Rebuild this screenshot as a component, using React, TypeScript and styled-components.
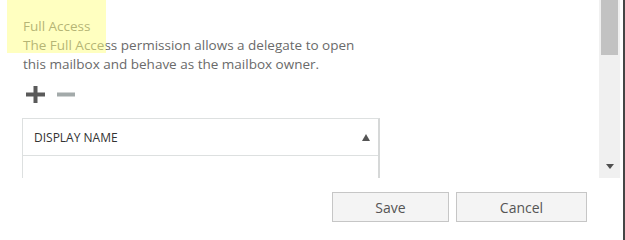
import React from 'react'
import styled, { createGlobalStyle } from 'styled-components'

const GlobalStyle = createGlobalStyle`
	body {
		margin: 0;
		background: #fff;
		font-family: "Open Sans", "Noto Sans", "Liberation Sans", sans-serif;
	}
`

const PlusIcon: React.FC = () => (
	<svg width="19" height="17" viewBox="0 0 19 17">
		<rect x="7.5" y="0" width="4" height="17" fill="#5a5a5a" />
		<rect x="0" y="6.5" width="19" height="4" fill="#5a5a5a" />
	</svg>
)

const MinusIcon: React.FC = () => (
	<svg width="18" height="17" viewBox="0 0 18 17">
		<rect x="0" y="6.5" width="18" height="4" fill="#a3aaaa" />
	</svg>
)

export default function App() {
	return (
		<>
			<GlobalStyle />
			<Frame>
				<Panel>
					<ScrollArea>
						<Content>
							<Highlight />
							<Title>Full Access</Title>
							<Description>
								The Full Access permission allows a delegate to open
								<br />
								this mailbox and behave as the mailbox owner.
							</Description>
							<Toolbar>
								<IconButton>
									<PlusIcon />
								</IconButton>
								<IconButton>
									<MinusIcon />
								</IconButton>
							</Toolbar>
							<Table>
								<HeaderRow>
									<HeaderLabel>DISPLAY NAME</HeaderLabel>
									<SortArrow />
								</HeaderRow>
								<Body />
							</Table>
						</Content>
						<Scrollbar>
							<Thumb />
							<DownArrow />
						</Scrollbar>
					</ScrollArea>
					<Footer>
						<Button width={117}>Save</Button>
						<Button width={131}>Cancel</Button>
					</Footer>
				</Panel>
				<Edge />
			</Frame>
		</>
	)
}

const Frame = styled.div`
	display: flex;
	width: 625px;
	height: 240px;
	overflow: hidden;
`

const Panel = styled.div`
	flex: 1;
	display: flex;
	flex-direction: column;
`

const Edge = styled.div`
	width: 2px;
	background: #454545;
`

const ScrollArea = styled.div`
	display: flex;
	height: 178px;
	overflow: hidden;
`

const Content = styled.div`
	position: relative;
	flex: 1;
	padding: 17px 0 0 23px;
	color: #6a6a6a;
	font-size: 13.5px;
	line-height: 19px;
`

const Highlight = styled.div`
	position: absolute;
	left: 7px;
	top: 0;
	width: 99px;
	height: 53px;
	background: rgba(255, 255, 130, 0.5);
	pointer-events: none;
`

const Title = styled.div``

const Description = styled.div``

const Toolbar = styled.div`
	display: flex;
	gap: 12px;
	margin-top: 11px;
	margin-left: 3px;
	height: 18px;
	align-items: center;
`

const IconButton = styled.span`
	display: flex;
`

const Table = styled.div`
	margin-top: 15px;
	margin-left: -1px;
	width: 355px;
	border: 1px solid #dde0e0;
	border-right: 2px solid #d6d8d8;
`

const HeaderRow = styled.div`
	display: flex;
	align-items: center;
	justify-content: space-between;
	height: 36px;
	padding: 0 8px 0 11px;
	border-bottom: 1px solid #dde0e0;
`

const HeaderLabel = styled.span`
	font-size: 12px;
	color: #333;
`

const SortArrow = styled.span`
	width: 0;
	height: 0;
	border-left: 4.5px solid transparent;
	border-right: 4.5px solid transparent;
	border-bottom: 7px solid #555;
`

const Body = styled.div`
	height: 40px;
`

const Scrollbar = styled.div`
	display: flex;
	flex-direction: column;
	align-items: center;
	width: 21px;
	margin-right: 3px;
	background: #f0f0f0;
`

const Thumb = styled.div`
	width: 17px;
	height: 55px;
	background: #c2c2c2;
`

const DownArrow = styled.span`
	margin-top: auto;
	margin-bottom: 9px;
	width: 0;
	height: 0;
	border-left: 4px solid transparent;
	border-right: 4px solid transparent;
	border-top: 5px solid #505050;
`

const Footer = styled.div`
	display: flex;
	justify-content: flex-end;
	gap: 7px;
	padding: 14px 36px 0 0;
`

const Button = styled.button<{ width: number }>`
	width: ${(p) => p.width}px;
	height: 30px;
	background: #f4f4f4;
	border: 1px solid #c6c6c6;
	color: #555;
	font-family: inherit;
	font-size: 14px;
	padding: 0;
`
